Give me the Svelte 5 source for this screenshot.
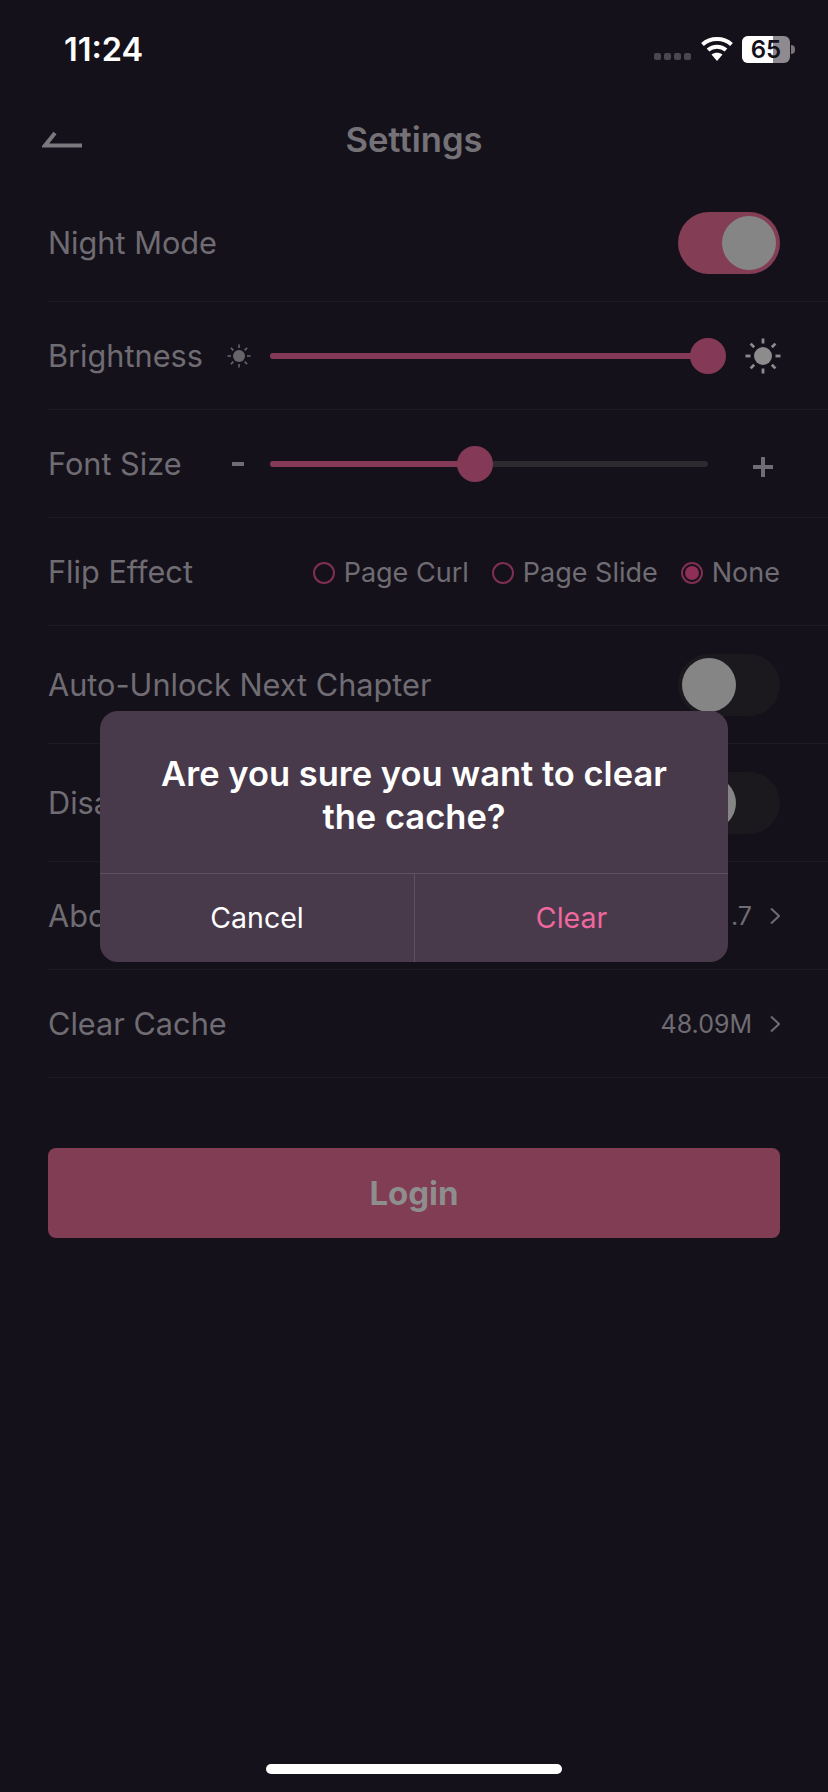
<script>
  const rays = [0, 45, 90, 135, 180, 225, 270, 315];
</script>

<div class="screen">
  <div class="status">
    <span class="time">11:24</span>
    <div class="status-right">
      <div class="dots"><i></i><i></i><i></i><i></i></div>
      <svg class="wifi" viewBox="0 0 32 24" width="32" height="24" aria-hidden="true">
        <path d="M1.5 7.5C9.5 .2 22.500 .2 30.500 7.500" fill="none" stroke="#fff" stroke-width="4"/>
        <path d="M7 13C12 8.600 20 8.600 25 13" fill="none" stroke="#fff" stroke-width="4"/>
        <path d="M16 24L10.500 17.500C13.500 15 18.500 15 21.500 17.500Z" fill="#fff"/>
      </svg>
      <div class="battery">
        <div class="cell"><span class="fill"></span><span class="pct">65</span></div>
        <span class="nub"></span>
      </div>
    </div>
  </div>

  <header class="nav">
    <svg class="back" viewBox="0 0 40 18" width="40" height="18" aria-hidden="true">
      <path d="M40 15.500H3L13 3" fill="none" stroke="#7b797e" stroke-width="4"/>
    </svg>
    <h1>Settings</h1>
  </header>

  <section class="list">
    <div class="row first">
      <span class="label">Night Mode</span>
      <span class="switch on"><span class="knob"></span></span>
    </div>

    <div class="row slider-row">
      <span class="label">Brightness</span>
      <svg class="sun small" viewBox="-12 -12 24 24" width="24" height="24" aria-hidden="true">
        <circle r="6" fill="#666569"/>
        {#each rays as r}
          <line x1="0" y1="-8" x2="0" y2="-11.500" stroke="#666569" stroke-width="1.600" transform="rotate({r})"/>
        {/each}
      </svg>
      <div class="track"><span class="value" style="width:100%"></span><span class="thumb" style="left:100%"></span></div>
      <svg class="sun big" viewBox="-18 -18 36 36" width="36" height="36" aria-hidden="true">
        <circle r="9" fill="#8c8c8c"/>
        {#each rays as r}
          <line x1="0" y1="-12.500" x2="0" y2="-17.500" stroke="#8c8c8c" stroke-width="2.800" transform="rotate({r})"/>
        {/each}
      </svg>
    </div>

    <div class="row slider-row">
      <span class="label">Font Size</span>
      <span class="minus"></span>
      <div class="track"><span class="value" style="width:46.800%"></span><span class="thumb" style="left:46.800%"></span></div>
      <span class="plus"></span>
    </div>

    <div class="row">
      <span class="label">Flip Effect</span>
      <div class="radios">
        <span class="radio"><i></i>Page Curl</span>
        <span class="radio"><i></i>Page Slide</span>
        <span class="radio checked"><i></i>None</span>
      </div>
    </div>

    <div class="row tall">
      <span class="label">Auto-Unlock Next Chapter</span>
      <span class="switch"><span class="knob"></span></span>
    </div>

    <div class="row tall">
      <span class="label">Disable Ads</span>
      <span class="switch"><span class="knob"></span></span>
    </div>

    <div class="row">
      <span class="label">About</span>
      <span class="detail">.7
        <svg viewBox="0 0 10 18" width="10" height="18" aria-hidden="true"><path d="M1 1.500L9 9L1 16.500" fill="none" stroke="#6e6b72" stroke-width="2"/></svg>
      </span>
    </div>

    <div class="row">
      <span class="label">Clear Cache</span>
      <span class="detail">48.09M
        <svg viewBox="0 0 10 18" width="10" height="18" aria-hidden="true"><path d="M1 1.500L9 9L1 16.500" fill="none" stroke="#6e6b72" stroke-width="2"/></svg>
      </span>
    </div>
  </section>

  <button class="login">Login</button>

  <div class="home"></div>

  <div class="dialog">
    <p>Are you sure you want to clear the cache?</p>
    <div class="actions">
      <button class="cancel">Cancel</button>
      <button class="clear">Clear</button>
    </div>
  </div>
</div>

<style>
  :global(body) {
    margin: 0;
    background: #15111a;
  }
  .screen {
    position: relative;
    width: 828px;
    height: 1792px;
    display: flex;
    flex-direction: column;
    background: #15111a;
    font-family: Inter, "Liberation Sans", sans-serif;
    color: #6f6c73;
    overflow: hidden;
  }
  .status {
    height: 88px;
    flex: none;
    display: flex;
    justify-content: space-between;
    align-items: flex-start;
    padding: 32px 33px 0 64px;
    box-sizing: border-box;
  }
  .time {
    color: #fff;
    font-size: 32.5px;
    line-height: 36px;
    font-weight: 600;
  }
  .status-right {
    display: flex;
    align-items: flex-start;
    padding-top: 4px;
  }
  .dots {
    display: flex;
    gap: 3px;
    margin-top: 17px;
    margin-right: 10px;
  }
  .dots i {
    width: 7px;
    height: 7px;
    border-radius: 2px;
    background: #4a474e;
  }
  .wifi {
    margin-right: 9px;
    margin-top: 1px;
  }
  .battery {
    display: flex;
    align-items: center;
  }
  .cell {
    position: relative;
    width: 48px;
    height: 27px;
    border-radius: 6px;
    background: #8e8a90;
    overflow: hidden;
    display: flex;
    align-items: center;
    justify-content: center;
  }
  .fill {
    position: absolute;
    left: 0;
    top: 0;
    bottom: 0;
    width: 31px;
    background: #fff;
  }
  .pct {
    position: relative;
    color: #15111a;
    font-size: 24px;
    font-weight: 600;
    line-height: 1;
  }
  .nub {
    width: 4px;
    height: 9px;
    margin-left: 1px;
    border-radius: 0 4px 4px 0;
    background: #77747a;
  }
  .nav {
    height: 101px;
    flex: none;
    position: relative;
    display: flex;
    justify-content: center;
  }
  .nav h1 {
    margin: 31px 0 0;
    font-size: 34.6px;
    line-height: 40px;
    font-weight: 600;
    color: #747177;
  }
  .back {
    position: absolute;
    left: 42px;
    top: 42px;
  }
  .list {
    margin-left: 48px;
  }
  .row {
    height: 108px;
    box-sizing: border-box;
    border-bottom: 1px solid #1e1a23;
    padding-right: 48px;
    display: flex;
    align-items: center;
    justify-content: space-between;
  }
  .row.first {
    height: 113px;
    padding-bottom: 6px;
  }
  .row.first .switch {
    margin-top: 2px;
  }
  .row.tall {
    height: 118px;
  }
  .label {
    font-size: 30.7px;
    white-space: nowrap;
  }
  .switch {
    width: 102px;
    height: 62px;
    border-radius: 31px;
    background: #1b181e;
    position: relative;
    display: block;
  }
  .switch .knob {
    position: absolute;
    top: 4px;
    left: 4px;
    width: 54px;
    height: 54px;
    border-radius: 50%;
    background: #858585;
  }
  .switch.on {
    background: #833e55;
  }
  .switch.on .knob {
    left: 44px;
  }
  .slider-row {
    display: grid;
    grid-template-columns: 166px 48px 438px 1fr;
    justify-content: stretch;
  }
  .sun.small {
    justify-self: center;
    transform: translateX(1px);
  }
  .minus {
    justify-self: center;
  }
  .sun.big,
  .plus {
    justify-self: end;
    margin-right: -1px;
  }
  .track {
    position: relative;
    height: 6px;
    margin-left: 8px;
    margin-right: -8px;
    border-radius: 3px;
    background: #2c292f;
  }
  .value {
    position: absolute;
    left: 0;
    top: 0;
    bottom: 0;
    border-radius: 3px;
    background: #843a57;
  }
  .thumb {
    position: absolute;
    top: 50%;
    width: 36px;
    height: 36px;
    border-radius: 50%;
    background: #843a57;
    transform: translate(-50%, -50%);
  }
  .minus {
    width: 12px;
    height: 4px;
    background: #6f6c73;
  }
  .plus {
    position: relative;
    width: 36px;
    height: 20px;
    margin-top: 7px;
  }
  .plus::before,
  .plus::after {
    content: "";
    position: absolute;
    background: #6f6c73;
  }
  .plus::before {
    left: 8px;
    top: 8px;
    width: 20px;
    height: 4px;
  }
  .plus::after {
    left: 16px;
    top: 0;
    width: 4px;
    height: 20px;
  }
  .radios {
    display: flex;
    gap: 23px;
    padding-top: 2px;
  }
  .radio {
    display: flex;
    align-items: center;
    gap: 9px;
    font-size: 27px;
    white-space: nowrap;
  }
  .radio i {
    position: relative;
    width: 22px;
    height: 22px;
    box-sizing: border-box;
    border: 2px solid #7f2f52;
    border-radius: 50%;
  }
  .radio.checked i::after {
    content: "";
    position: absolute;
    inset: 2px;
    border-radius: 50%;
    background: #8d2f57;
  }
  .detail {
    display: flex;
    align-items: center;
    gap: 18px;
    font-size: 25px;
  }
  .login {
    flex: none;
    margin: 70px 48px 0;
    height: 90px;
    border: 0;
    border-radius: 8px;
    background: #813d53;
    color: #8e8e8e;
    font-family: inherit;
    font-size: 33px;
    font-weight: 700;
    padding-bottom: 2px;
  }
  .home {
    position: absolute;
    left: 266px;
    bottom: 18px;
    width: 296px;
    height: 10px;
    border-radius: 5px;
    background: #fff;
  }
  .dialog {
    position: absolute;
    left: 100px;
    top: 711px;
    width: 628px;
    height: 251px;
    border-radius: 18px;
    background: #483a4a;
    display: flex;
    flex-direction: column;
    overflow: hidden;
  }
  .dialog p {
    flex: 1;
    margin: 0;
    padding: 41px 40px 0;
    font-size: 34.5px;
    line-height: 43px;
    font-weight: 600;
    color: #fff;
    text-align: center;
  }
  .actions {
    height: 88px;
    display: grid;
    grid-template-columns: 315px 1fr;
    border-top: 1px solid #5e5260;
  }
  .actions button {
    border: 0;
    background: none;
    font-family: inherit;
    font-size: 28.5px;
    padding-bottom: 3px;
  }
  .cancel {
    color: #fff;
    border-right: 1px solid #5e5260 !important;
  }
  .clear {
    color: #f0679f;
  }
</style>
